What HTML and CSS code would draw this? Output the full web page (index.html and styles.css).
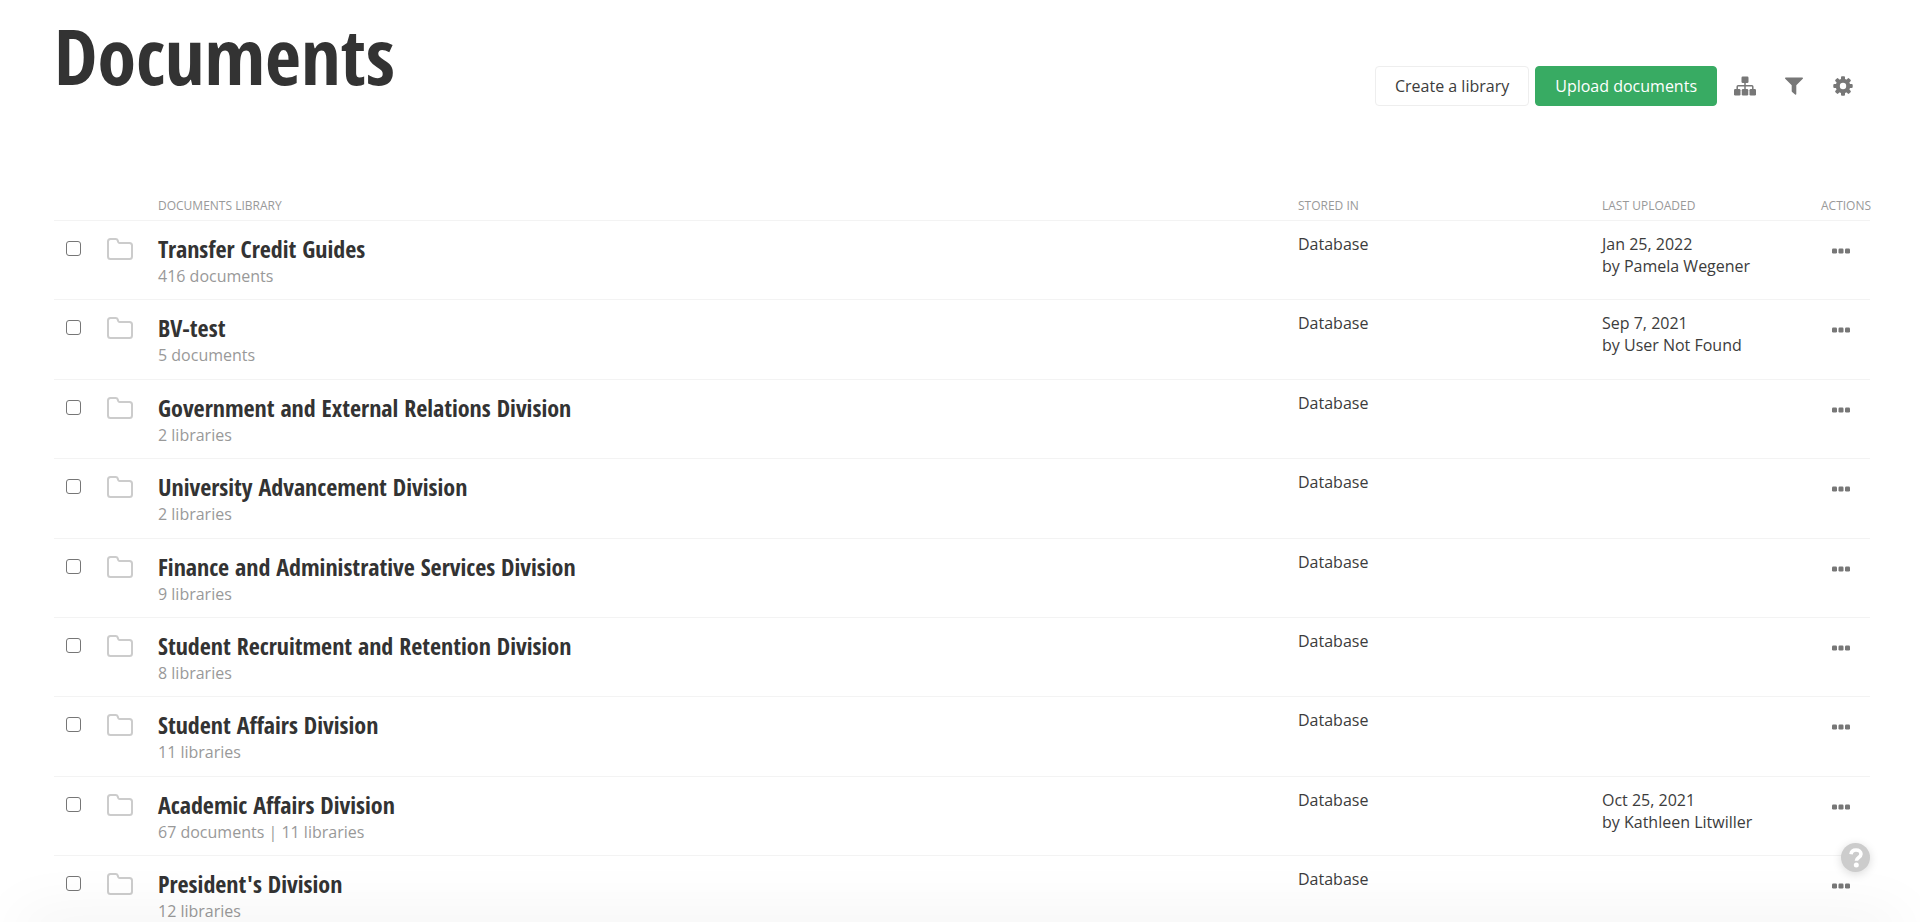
FILE: index.html
```html
<!DOCTYPE html>
<html lang="en">
<head>
    <meta charset="UTF-8">
    <meta name="viewport" content="width=device-width, initial-scale=1.0">
    <title>Documents</title>
    <link rel="stylesheet" href="styles.css">
</head>
<body>
    <!-- Shared icons -->
    <svg class="icon-defs" aria-hidden="true">
        <symbol id="icon-folder" viewBox="0 0 26 22">
            <path d="M3.5 1h5.2c1 0 1.7.5 2 1.400l.5 1.600c.2.700.7 1 1.400 1h9.900c1.400 0 2.500 1.100 2.500 2.500v11c0 1.400-1.100 2.500-2.500 2.500h-19C2.100 21 1 19.900 1 18.500v-15C1 2.100 2.100 1 3.500 1z" fill="none" stroke="#ccc" stroke-width="2"/>
        </symbol>
        <symbol id="icon-more" viewBox="0 0 18 6">
            <rect x="0" y="0.500" width="5" height="5" rx="1.200"/>
            <rect x="6.500" y="0.500" width="5" height="5" rx="1.200"/>
            <rect x="13" y="0.500" width="5" height="5" rx="1.200"/>
        </symbol>
    </svg>

    <header class="page-header">
        <h1>Documents</h1>
        <div class="toolbar">
            <button class="btn" type="button">Create a library</button>
            <button class="btn btn-primary" type="button">Upload documents</button>
            <button class="icon-btn" type="button" aria-label="Hierarchy">
                <svg width="22" height="20" viewBox="0 0 22 20">
                    <rect x="7.500" y="0.500" width="7" height="6.500" rx="1.200"/>
                    <rect x="0" y="13" width="6.500" height="6.500" rx="1.200"/>
                    <rect x="7.750" y="13" width="6.500" height="6.500" rx="1.200"/>
                    <rect x="15.500" y="13" width="6.500" height="6.500" rx="1.200"/>
                    <path d="M11 6v8M3.200 14v-3.300c0-.6.300-.9.900-.9h13.800c.6 0 .9.300.9.900V14" fill="none" stroke="#777" stroke-width="1.500"/>
                </svg>
            </button>
            <button class="icon-btn" type="button" aria-label="Filter">
                <svg width="18" height="18" viewBox="0 0 18 18">
                    <path d="M.7.500h16.600c.6 0 .9.700.5 1.200L11.300 8.300V17c0 .6-.7.9-1.200.5l-3-2.600c-.3-.3-.4-.5-.4-.9V8.300L.2 1.700C-.2 1.200.1.500.7.500z"/>
                </svg>
            </button>
            <button class="icon-btn" type="button" aria-label="Settings">
                <svg width="20" height="20" viewBox="0 0 20 20">
                    <g>
                        <rect x="8" y="0.300" width="4" height="19.400" rx="1"/>
                        <rect x="8" y="0.300" width="4" height="19.400" rx="1" transform="rotate(45 10 10)"/>
                        <rect x="8" y="0.300" width="4" height="19.400" rx="1" transform="rotate(90 10 10)"/>
                        <rect x="8" y="0.300" width="4" height="19.400" rx="1" transform="rotate(135 10 10)"/>
                        <circle cx="10" cy="10" r="7.300"/>
                        <circle cx="10" cy="10" r="3.200" fill="#fff"/>
                    </g>
                </svg>
            </button>
        </div>
    </header>

    <main>
        <table class="libraries">
            <thead>
                <tr>
                    <th class="col-check"></th>
                    <th class="col-icon"></th>
                    <th>Documents library</th>
                    <th class="col-stored">Stored in</th>
                    <th class="col-date">Last uploaded</th>
                    <th class="col-actions">Actions</th>
                </tr>
            </thead>
            <tbody>
                <tr>
                    <td class="check"><input type="checkbox" aria-label="Select Transfer Credit Guides"></td>
                    <td class="folder"><svg width="26" height="22"><use href="#icon-folder"/></svg></td>
                    <td><a class="title" href="#">Transfer Credit Guides</a><span class="count">416 documents</span></td>
                    <td>Database</td>
                    <td>Jan 25, 2022<br>by Pamela Wegener</td>
                    <td class="actions"><button class="more-btn" type="button" aria-label="Actions"><svg width="18" height="6"><use href="#icon-more"/></svg></button></td>
                </tr>
                <tr>
                    <td class="check"><input type="checkbox" aria-label="Select BV-test"></td>
                    <td class="folder"><svg width="26" height="22"><use href="#icon-folder"/></svg></td>
                    <td><a class="title" href="#">BV-test</a><span class="count">5 documents</span></td>
                    <td>Database</td>
                    <td>Sep 7, 2021<br>by User Not Found</td>
                    <td class="actions"><button class="more-btn" type="button" aria-label="Actions"><svg width="18" height="6"><use href="#icon-more"/></svg></button></td>
                </tr>
                <tr>
                    <td class="check"><input type="checkbox" aria-label="Select Government and External Relations Division"></td>
                    <td class="folder"><svg width="26" height="22"><use href="#icon-folder"/></svg></td>
                    <td><a class="title" href="#">Government and External Relations Division</a><span class="count">2 libraries</span></td>
                    <td>Database</td>
                    <td></td>
                    <td class="actions"><button class="more-btn" type="button" aria-label="Actions"><svg width="18" height="6"><use href="#icon-more"/></svg></button></td>
                </tr>
                <tr>
                    <td class="check"><input type="checkbox" aria-label="Select University Advancement Division"></td>
                    <td class="folder"><svg width="26" height="22"><use href="#icon-folder"/></svg></td>
                    <td><a class="title" href="#">University Advancement Division</a><span class="count">2 libraries</span></td>
                    <td>Database</td>
                    <td></td>
                    <td class="actions"><button class="more-btn" type="button" aria-label="Actions"><svg width="18" height="6"><use href="#icon-more"/></svg></button></td>
                </tr>
                <tr>
                    <td class="check"><input type="checkbox" aria-label="Select Finance and Administrative Services Division"></td>
                    <td class="folder"><svg width="26" height="22"><use href="#icon-folder"/></svg></td>
                    <td><a class="title" href="#">Finance and Administrative Services Division</a><span class="count">9 libraries</span></td>
                    <td>Database</td>
                    <td></td>
                    <td class="actions"><button class="more-btn" type="button" aria-label="Actions"><svg width="18" height="6"><use href="#icon-more"/></svg></button></td>
                </tr>
                <tr>
                    <td class="check"><input type="checkbox" aria-label="Select Student Recruitment and Retention Division"></td>
                    <td class="folder"><svg width="26" height="22"><use href="#icon-folder"/></svg></td>
                    <td><a class="title" href="#">Student Recruitment and Retention Division</a><span class="count">8 libraries</span></td>
                    <td>Database</td>
                    <td></td>
                    <td class="actions"><button class="more-btn" type="button" aria-label="Actions"><svg width="18" height="6"><use href="#icon-more"/></svg></button></td>
                </tr>
                <tr>
                    <td class="check"><input type="checkbox" aria-label="Select Student Affairs Division"></td>
                    <td class="folder"><svg width="26" height="22"><use href="#icon-folder"/></svg></td>
                    <td><a class="title" href="#">Student Affairs Division</a><span class="count">11 libraries</span></td>
                    <td>Database</td>
                    <td></td>
                    <td class="actions"><button class="more-btn" type="button" aria-label="Actions"><svg width="18" height="6"><use href="#icon-more"/></svg></button></td>
                </tr>
                <tr>
                    <td class="check"><input type="checkbox" aria-label="Select Academic Affairs Division"></td>
                    <td class="folder"><svg width="26" height="22"><use href="#icon-folder"/></svg></td>
                    <td><a class="title" href="#">Academic Affairs Division</a><span class="count">67 documents | 11 libraries</span></td>
                    <td>Database</td>
                    <td>Oct 25, 2021<br>by Kathleen Litwiller</td>
                    <td class="actions"><button class="more-btn" type="button" aria-label="Actions"><svg width="18" height="6"><use href="#icon-more"/></svg></button></td>
                </tr>
                <tr>
                    <td class="check"><input type="checkbox" aria-label="Select President's Division"></td>
                    <td class="folder"><svg width="26" height="22"><use href="#icon-folder"/></svg></td>
                    <td><a class="title" href="#">President's Division</a><span class="count">12 libraries</span></td>
                    <td>Database</td>
                    <td></td>
                    <td class="actions"><button class="more-btn" type="button" aria-label="Actions"><svg width="18" height="6"><use href="#icon-more"/></svg></button></td>
                </tr>
            </tbody>
        </table>
    </main>

    <div class="bottom-shade"></div>
    <button class="help-btn" type="button" aria-label="Help">
        <svg width="14" height="20" viewBox="0 0 14 20">
            <path d="M2 6.200C2.300 3.400 4.200 2 7 2c2.900 0 5 1.500 5 4 0 3.600-4.600 3.200-4.600 6.800" fill="none" stroke="#fff" stroke-width="3.600"/>
            <circle cx="7.300" cy="17" r="2.500" fill="#fff"/>
        </svg>
    </button>
</body>
</html>
```

FILE: styles.css
```css
* {
    box-sizing: border-box;
}
body {
    font-family: "Open Sans", "Noto Sans", sans-serif;
    font-size: 16px;
    line-height: 22px;
    color: #3c3c3c;
    background: #fff;
    margin: 0;
    padding: 0 50px 0 54px;
}
.icon-defs {
    display: none;
}
.page-header {
    display: flex;
    justify-content: space-between;
    align-items: flex-start;
    height: 190px;
}
h1, .title {
    font-family: "Open Sans Condensed", "Open Sans", sans-serif;
    font-weight: 700;
    color: #333;
}
h1 {
    font-size: 78px;
    line-height: 80px;
    margin: 15px 0 0;
}
.toolbar {
    display: flex;
    align-items: center;
    gap: 6px;
    margin: 66px 6px 0 0;
}
button {
    font-family: inherit;
    cursor: pointer;
}
.btn {
    height: 40px;
    padding: 0 19px;
    font-size: 16px;
    color: #3c3c3c;
    background: #fff;
    border: 1px solid #eee;
    border-radius: 4px;
}
.btn-primary {
    color: #fff;
    background: #38ab63;
    border-color: #38ab63;
}
.icon-btn {
    display: flex;
    align-items: center;
    justify-content: center;
    width: 43px;
    height: 40px;
    padding: 0;
    background: none;
    border: 0;
    fill: #777;
}
.libraries {
    width: 100%;
    table-layout: fixed;
    border-collapse: collapse;
}
th {
    height: 30px;
    padding: 2px 0 0;
    font-size: 12px;
    line-height: 28px;
    font-weight: 400;
    text-align: left;
    text-transform: uppercase;
    white-space: nowrap;
    color: #999;
}
tr {
    border-bottom: 1px solid #f3f3f3;
}
.col-check {
    width: 53px;
}
.col-icon {
    width: 51px;
}
.col-stored {
    width: 304px;
}
.col-date {
    width: 219px;
}
.col-actions {
    width: 49px;
}
td {
    height: 79px;
    padding: 12px 0 0;
    vertical-align: top;
}
tr:nth-child(5n + 2) td, tr:nth-child(5n + 4) td {
    height: 80px;
}
.title {
    display: block;
    font-size: 24px;
    line-height: 32px;
    text-decoration: none;
}
.count {
    display: block;
    color: #999;
}
.check input {
    display: block;
    appearance: none;
    width: 15px;
    height: 15px;
    margin: 8px 0 0 12px;
    background: #fff;
    border: 1px solid #767676;
    border-radius: 3px;
}
.folder svg {
    display: block;
    margin-top: 5px;
}
.more-btn {
    display: block;
    padding: 15px 11px;
    background: none;
    border: 0;
    fill: #777;
}
.more-btn svg {
    display: block;
}
.bottom-shade {
    position: fixed;
    left: 20px;
    right: 20px;
    bottom: -20px;
    height: 20px;
    box-shadow: 0 0 60px rgba(0, 0, 0, 0.1);
    pointer-events: none;
}
.help-btn {
    position: fixed;
    right: 50px;
    bottom: 50px;
    display: flex;
    align-items: center;
    justify-content: center;
    width: 29px;
    height: 29px;
    padding: 0;
    background: #ccc;
    border: 0;
    border-radius: 50%;
    box-shadow: 0 2px 10px rgba(0, 0, 0, 0.15);
}
```
